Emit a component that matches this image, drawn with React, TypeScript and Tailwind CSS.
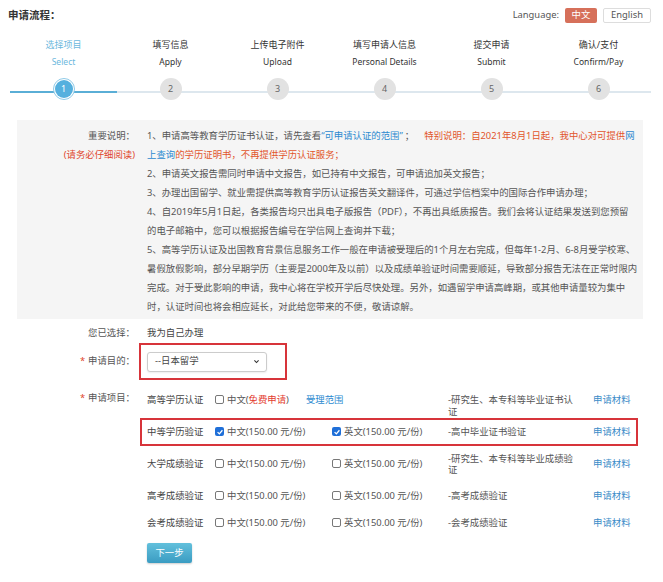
import { Fragment } from "react";

const steps = [
  { zh: "选择项目", en: "Select" },
  { zh: "填写信息", en: "Apply" },
  { zh: "上传电子附件", en: "Upload" },
  { zh: "填写申请人信息", en: "Personal Details" },
  { zh: "提交申请", en: "Submit" },
  { zh: "确认/支付", en: "Confirm/Pay" },
];

const noticeLines: React.ReactNode[] = [
  <Fragment key="l1">
    1、申请高等教育学历证书认证，请先查看
    <span className="text-[#2c8ad0]">“可申请认证的范围”</span>
    <span className="ml-[2px] mr-[10px]">；</span>
    <span className="text-[#e2552c]">特别说明：自2021年8月1日起，我中心对可提供</span>
    <span className="text-[#2c8ad0]">网</span>
  </Fragment>,
  <Fragment key="l2">
    <span className="text-[#2c8ad0]">上查询</span>
    <span className="text-[#e2552c]">的学历证明书，不再提供学历认证服务；</span>
  </Fragment>,
  "2、申请英文报告需同时申请中文报告，如已持有中文报告，可申请追加英文报告；",
  "3、办理出国留学、就业需提供高等教育学历认证报告英文翻译件，可通过学信档案中的国际合作申请办理；",
  "4、自2019年5月1日起，各类报告均只出具电子版报告（PDF），不再出具纸质报告。我们会将认证结果发送到您预留",
  "的电子邮箱中，您可以根据报告编号在学信网上查询并下载；",
  "5、高等学历认证及出国教育背景信息服务工作一般在申请被受理后的1个月左右完成，但每年1-2月、6-8月受学校寒、",
  "暑假放假影响，部分早期学历（主要是2000年及以前）以及成绩单验证时间需要顺延，导致部分报告无法在正常时限内",
  "完成。对于受此影响的申请，我中心将在学校开学后尽快处理。另外，如遇留学申请高峰期，或其他申请量较为集中",
  "时，认证时间也将会相应延长，对此给您带来的不便，敬请谅解。",
];

type Item = {
  name: string;
  checked: boolean;
  desc: string;
  h: string;
  boxed?: boolean;
};

const items: Item[] = [
  { name: "中等学历验证", checked: true, desc: "-高中毕业证书验证", h: "h-[28px]", boxed: true },
  { name: "大学成绩验证", checked: false, desc: "-研究生、本专科等毕业成绩验证", h: "h-[36px]" },
  { name: "高考成绩验证", checked: false, desc: "-高考成绩验证", h: "h-[28px]" },
  { name: "会考成绩验证", checked: false, desc: "-会考成绩验证", h: "h-[26px]" },
];

function Checkbox({ checked }: { checked: boolean }) {
  if (checked) {
    return (
      <span className="inline-flex h-[9px] w-[9px] shrink-0 items-center justify-center rounded-[2px] bg-[#1f6fd8]">
        <svg viewBox="0 0 10 10" className="h-[8px] w-[8px]">
          <path d="M2 5.2 L4.2 7.3 L8 2.8" fill="none" stroke="white" strokeWidth="1.6" />
        </svg>
      </span>
    );
  }
  return <span className="inline-block h-[9px] w-[9px] shrink-0 rounded-[2px] border border-[#777] bg-white" />;
}

export default function App() {
  return (
    <div
      className="relative h-[582px] w-[663px] overflow-hidden bg-white text-[9.4px] text-[#555]"
      style={{ fontFamily: '"Noto Sans", "Noto Sans CJK SC", sans-serif' }}
    >
      {/* header */}
      <div className="flex h-[31px] items-center justify-between pl-[8px] pr-[12px]">
        <div className="text-[10.5px] font-bold text-[#333]">申请流程：</div>
        <div className="flex items-center">
          <span className="mr-[6px] text-[#555]">Language:</span>
          <span className="flex h-[15px] w-[32px] items-center justify-center rounded-[2px] bg-[#d6705a] text-white">中文</span>
          <span className="ml-[6px] flex h-[15px] w-[48px] items-center justify-center rounded-[2px] border border-[#ddd] text-[#555]">
            English
          </span>
        </div>
      </div>

      {/* steps */}
      <div className="relative mt-[5px] h-[74px]">
        <div className="absolute left-[10px] right-[12px] top-[55px] h-[2px] bg-[#dde7ee]" />
        <div className="absolute left-[10px] top-[55px] h-[2px] w-[107px] bg-[#5aaed6]" />
        <div className="relative ml-[10px] grid w-[642px] grid-cols-6">
          {steps.map((s, i) => (
            <div key={s.zh} className="flex flex-col items-center">
              <div className={`h-[17px] text-[9px] leading-[17px] ${i === 0 ? "text-[#6cb8dd]" : "text-[#333]"}`}>{s.zh}</div>
              <div className={`h-[17px] text-[8.5px] leading-[17px] ${i === 0 ? "text-[#6cb8dd]" : "text-[#333]"}`}>{s.en}</div>
              {i === 0 ? (
                <div className="mt-[8px] flex h-[22px] w-[22px] items-center justify-center rounded-full border border-[#8fcbe8] bg-white">
                  <div className="flex h-[18px] w-[18px] items-center justify-center rounded-full bg-[#55b0de] text-[9px] text-white">
                    1
                  </div>
                </div>
              ) : (
                <div className="mt-[8px] flex h-[22px] w-[22px] items-center justify-center rounded-full bg-[#e2e2e2] text-[9px] text-[#666]">
                  {i + 1}
                </div>
              )}
            </div>
          ))}
        </div>
      </div>

      {/* notice */}
      <div className="ml-[17px] mt-[10px] flex w-[626px] bg-[#f5f5f5] pb-[3px] pt-[6px]">
        <div className="w-[118px] shrink-0 text-right leading-[19px]">
          <div className="text-[#555]">重要说明：</div>
          <div className="text-[#e0452c]">(请务必仔细阅读)</div>
        </div>
        <div className="pl-[12px] leading-[19px]">
          {noticeLines.map((l, i) => (
            <div key={i} className="whitespace-nowrap">
              {l}
            </div>
          ))}
        </div>
      </div>

      {/* chosen */}
      <div className="mt-[4px] flex h-[20px] items-center">
        <div className="w-[135px] text-right">您已选择：</div>
        <div className="pl-[12px] text-[#444]">我为自己办理</div>
      </div>

      {/* purpose */}
      <div className="flex h-[37px] items-center">
        <div className="w-[135px] text-right">
          <span className="mr-[3px] text-[#e0452c]">*</span>申请目的：
        </div>
        <div className="ml-[4px] flex h-[37px] w-[148px] items-center border-2 border-[#d7343a] pl-[6px]">
          <div className="flex h-[20px] w-[120px] items-center justify-between rounded-[3px] border border-[#ccc] bg-white pl-[7px] pr-[6px] text-[#444] shadow-[0_1px_2px_rgba(0,0,0,0.08)]">
            <span>--日本留学</span>
            <svg viewBox="0 0 10 10" className="h-[7px] w-[7px]">
              <path d="M2 3.5 L5 6.5 L8 3.5" fill="none" stroke="#333" strokeWidth="1.6" />
            </svg>
          </div>
        </div>
      </div>

      {/* items */}
      <div className="mt-[12px] flex">
        <div className="w-[135px] text-right leading-[11.5px]">
          <span className="mr-[3px] text-[#e0452c]">*</span>申请项目：
        </div>
        <div className="ml-[5px]">
          <div className="flex h-[26px] items-start border-2 border-transparent pl-[5px] leading-[11.5px]">
            <div className="w-[68px] shrink-0 text-[#444]">高等学历认证</div>
            <div className="flex w-[233px] shrink-0 items-start">
              <div className="flex items-center gap-[3px]">
                <Checkbox checked={false} />
                <span>
                  中文(<span className="text-[#e33b2e]">免费申请</span>)
                </span>
              </div>
              <span className="ml-[17px] text-[#2c8ad0]">受理范围</span>
            </div>
            <div className="mr-[15px] w-[130px] shrink-0 -mt-[2px] leading-[11.5px] pt-[2px]">-研究生、本专科等毕业证书认证</div>
            <div className="text-[#3a8cc8]">申请材料</div>
          </div>
          {items.map((it) => (
            <div
              key={it.name}
              className={`flex w-[498px] items-center border-2 pl-[5px] ${it.boxed ? "border-[#d7343a]" : "border-transparent"} ${it.h}`}
            >
              <div className="w-[68px] shrink-0 text-[#444]">{it.name}</div>
              <div className="flex w-[117px] shrink-0 items-center gap-[3px]">
                <Checkbox checked={it.checked} />
                <span>中文(150.00 元/份)</span>
              </div>
              <div className="flex w-[116px] shrink-0 items-center gap-[3px]">
                <Checkbox checked={it.checked} />
                <span>英文(150.00 元/份)</span>
              </div>
              <div className="mr-[15px] w-[130px] shrink-0 leading-[11.5px]">{it.desc}</div>
              <div className="text-[#3a8cc8]">申请材料</div>
            </div>
          ))}
          <button className="ml-[7px] mt-[7px] flex h-[20px] w-[45px] items-center justify-center rounded-[2px] bg-gradient-to-b from-[#62c0dc] to-[#3a9cc2] text-white shadow-[0_1px_2px_rgba(0,0,0,0.2)]">
            下一步
          </button>
        </div>
      </div>
    </div>
  );
}
